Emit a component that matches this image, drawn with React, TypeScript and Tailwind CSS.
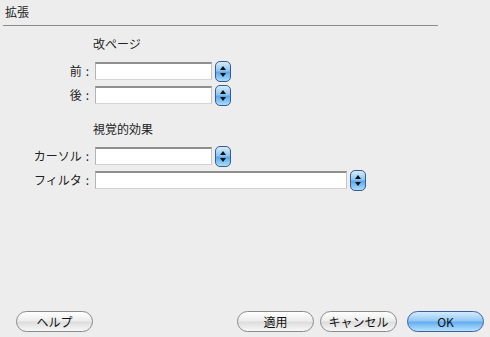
import React from 'react'

const Stepper = () => (
  <div className="ml-[3px] -mt-[1px] w-[16px] h-[21px] rounded-[5px] border border-[#3b5a8f] bg-[linear-gradient(to_bottom,#d6ecfd,#8ec6f3_45%,#5ea9ec_55%,#a8dcff)] flex items-center justify-center shrink-0">
    <svg width="8" height="13" viewBox="0 0 8 13">
      <path d="M4 1 L7 5 L1 5 Z" fill="#111" />
      <path d="M1 8 L7 8 L4 12 Z" fill="#111" />
    </svg>
  </div>
)

const Field = ({ label, width }: { label: string; width: string }) => (
  <div className="flex items-start h-[18px]">
    <div className="w-[90px] flex justify-end text-[12px] leading-[18px] pr-[1px]">
      <span>{label}</span>
      <span className="ml-[4px]">:</span>
    </div>
    <div className={`ml-[5px] h-[18px] bg-white border-t-2 border-t-[#8e8e8e] border-l border-l-[#b4b4b4] border-r border-r-[#c4c4c4] border-b border-b-[#d4d4d4] ${width}`} />
    <Stepper />
  </div>
)

const AquaButton = ({ children, primary }: { children: React.ReactNode; primary?: boolean }) => (
  <button
    className={
      primary
        ? 'w-[77px] h-[21px] rounded-full border border-[#3f5fa3] bg-[linear-gradient(to_bottom,#d4ebfd,#92c8f5_48%,#62acef_52%,#b4e4ff)] text-[12px] leading-[19px] text-[#111]'
        : 'w-[77px] h-[21px] rounded-full border border-[#8a8a8a] bg-[linear-gradient(to_bottom,#ffffff,#ececec_48%,#dcdcdc_52%,#f8f8f8)] text-[12px] leading-[19px] text-[#111]'
    }
  >
    {children}
  </button>
)

export default function App() {
  return (
    <div className="w-[490px] h-[337px] bg-[#ededed] flex flex-col text-[#222] font-['Noto_Sans_CJK_JP','Noto_Sans',sans-serif]">
      <div className="pl-[5px] pt-[4px] text-[12px] leading-[16px]">拡張</div>
      <div className="ml-[3px] mt-[5px] w-[435px] h-px bg-[#8c8c8c]" />

      <div className="mt-[10px] pl-[93px] text-[12px] leading-[16px]">改ページ</div>
      <div className="mt-[10px] flex flex-col gap-[6px]">
        <Field label="前" width="w-[117px]" />
        <Field label="後" width="w-[117px]" />
      </div>

      <div className="mt-[17px] pl-[93px] text-[12px] leading-[16px]">視覚的効果</div>
      <div className="mt-[10px] flex flex-col gap-[6px]">
        <Field label="カーソル" width="w-[117px]" />
        <Field label="フィルタ" width="w-[252px]" />
      </div>

      <div className="mt-auto mb-[5px] flex items-center px-[16px] pr-[6px]">
        <AquaButton>ヘルプ</AquaButton>
        <div className="flex-1" />
        <AquaButton>適用</AquaButton>
        <div className="w-[6px]" />
        <AquaButton>キャンセル</AquaButton>
        <div className="w-[10px]" />
        <AquaButton primary>OK</AquaButton>
      </div>
    </div>
  )
}
